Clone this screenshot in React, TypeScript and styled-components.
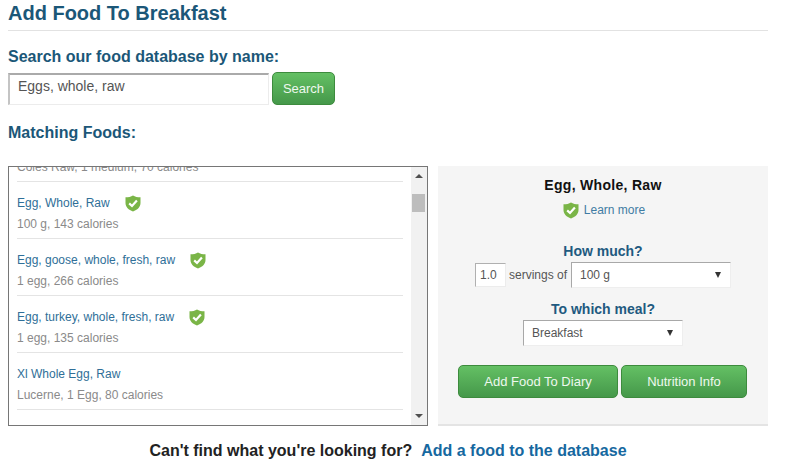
import React from "react";
import styled, { createGlobalStyle } from "styled-components";

const Global = createGlobalStyle`
  html, body { margin: 0; padding: 0; background: #fff; }
  body { font-family: "Liberation Sans", Arial, sans-serif; }
`;

const Page = styled.div`
  width: 760px;
  height: 472px;
  padding: 0 35px 0 8px;
  overflow: hidden;
`;
const Title = styled.h1`
  margin: 0;
  height: 30px;
  line-height: 26px;
  font-size: 20px;
  font-weight: bold;
  color: #1b5778;
  border-bottom: 1px solid #e2e2e2;
`;
const SearchLabel = styled.h2`
  margin: 16px 0 0;
  height: 20px;
  line-height: 20px;
  font-size: 16px;
  font-weight: bold;
  color: #1b5778;
`;
const SearchRow = styled.div`
  display: flex;
  align-items: flex-start;
  gap: 3px;
  margin-top: 5px;
`;
const SearchInput = styled.div`
  box-sizing: border-box;
  width: 261px;
  height: 32px;
  margin-top: 1px;
  padding: 2px 0 0 8px;
  font-size: 14px;
  line-height: 18px;
  color: #555;
  background: #fff;
  border: 1px solid #ececec;
  border-top: 2px solid #aaa;
  border-left: 2px solid #c4c4c4;
`;
const GreenButton = styled.button<{ $w: number; $h: number }>`
  box-sizing: border-box;
  width: ${(p) => p.$w}px;
  height: ${(p) => p.$h}px;
  padding: 0;
  font-family: inherit;
  font-size: 13px;
  color: #eef8ee;
  background: linear-gradient(#64c064, #45984a);
  border: 1px solid #3d8b3d;
  border-radius: 5px;
`;
const MatchLabel = styled.h2`
  margin: 18px 0 0;
  height: 20px;
  line-height: 20px;
  font-size: 16px;
  font-weight: bold;
  color: #1b5778;
`;
const Columns = styled.div`
  display: flex;
  gap: 10px;
  margin-top: 23px;
`;
const ListBox = styled.div`
  box-sizing: border-box;
  display: flex;
  width: 420px;
  height: 260px;
  border: 1px solid #767676;
  overflow: hidden;
`;
const ListInner = styled.div`
  flex: 1;
  min-width: 0;
  padding: 0 8px;
  margin-top: -42px;
`;
const Row = styled.div`
  box-sizing: border-box;
  height: 57px;
  padding-top: 11px;
  border-bottom: 1px solid #e4e4e4;
`;
const NameLine = styled.div`
  display: flex;
  align-items: center;
  height: 20px;
  font-size: 12px;
  color: #2f6f98;
`;
const Sub = styled.div`
  height: 20px;
  margin-top: 1px;
  line-height: 20px;
  font-size: 12px;
  color: #8a8a8a;
`;
const NameCheck = styled.span`
  display: inline-flex;
  margin-left: 15px;
`;
const Scrollbar = styled.div`
  position: relative;
  flex: none;
  width: 16px;
  background: #f1f1f1;
  display: flex;
  flex-direction: column;
  align-items: center;
  justify-content: space-between;
  padding: 7px 0;
  box-sizing: border-box;
`;
const Thumb = styled.div`
  position: absolute;
  top: 27px;
  left: 1px;
  width: 13px;
  height: 18px;
  background: #bdbdbd;
`;
const ArrowUp = styled.div`
  width: 0;
  height: 0;
  border-left: 4px solid transparent;
  border-right: 4px solid transparent;
  border-bottom: 4px solid #505050;
`;
const ArrowDown = styled(ArrowUp)`
  border-bottom: 0;
  border-top: 4px solid #505050;
`;
const Panel = styled.div`
  box-sizing: border-box;
  width: 330px;
  height: 260px;
  padding-top: 11px;
  background: #f5f5f5;
  border-bottom: 2px solid #e4e4e4;
  display: flex;
  flex-direction: column;
  align-items: center;
`;
const PanelName = styled.div`
  height: 16px;
  line-height: 16px;
  font-size: 14px;
  font-weight: bold;
  color: #111;
  letter-spacing: 0.3px;
`;
const LearnRow = styled.div`
  display: flex;
  align-items: center;
  gap: 5px;
  margin: 7px 0 0 2px;
  height: 20px;
  font-size: 12px;
  color: #3f7ca3;
`;
const PanelHeading = styled.div<{ $mt: number }>`
  margin-top: ${(p) => p.$mt}px;
  height: 18px;
  line-height: 18px;
  font-size: 14px;
  font-weight: bold;
  color: #1f5a80;
`;
const ServingRow = styled.div`
  display: flex;
  align-items: center;
  height: 26px;
  margin-top: 2px;
  font-size: 12px;
  color: #555;
`;
const QtyBox = styled.div`
  box-sizing: border-box;
  width: 31px;
  height: 24px;
  padding: 0 0 0 4px;
  margin-right: 3px;
  line-height: 22px;
  background: #fff;
  border: 1px solid #ececec;
  border-top: 1px solid #b0b0b0;
  border-left: 1px solid #b0b0b0;
`;
const SelectBox = styled.div<{ $w: number }>`
  box-sizing: border-box;
  display: flex;
  align-items: center;
  justify-content: space-between;
  width: ${(p) => p.$w}px;
  height: 26px;
  padding: 0 9px 0 8px;
  font-size: 12px;
  color: #555;
  background: #fff;
  border: 1px solid #eee;
  border-top: 1px solid #a8a8a8;
  border-left: 1px solid #a8a8a8;
`;
const Caret = styled.span`
  width: 0;
  height: 0;
  border-left: 3px solid transparent;
  border-right: 3px solid transparent;
  border-top: 6px solid #333;
`;
const ServingLabel = styled.span`
  margin-right: 4px;
`;
const MealSelect = styled.div`
  margin-top: 2px;
`;
const ButtonRow = styled.div`
  display: flex;
  gap: 3px;
  margin: 19px 1px 0 0;
`;
const Footer = styled.div`
  display: flex;
  justify-content: center;
  gap: 9px;
  margin-top: 15px;
  height: 20px;
  line-height: 20px;
  font-size: 16px;
  font-weight: bold;
  color: #222;
`;
const FooterLink = styled.span`
  color: #1668a0;
`;

const Shield = ({ size }: { size: number }) => (
  <svg width={size} height={size + 1} viewBox="0 0 16 17" aria-hidden="true">
    <path
      d="M8 0.5 C10 1.8 12.6 2.3 15.5 2.3 L15.5 8 C15.5 12 12.4 15 8 16.5 C3.6 15 0.5 12 0.5 8 L0.5 2.3 C3.4 2.3 6 1.8 8 0.5 Z"
      fill="#7ab547"
    />
    <path d="M4.2 8.4 L7 11 L11.9 5.6" fill="none" stroke="#fff" strokeWidth="2.2" />
  </svg>
);

const foods = [
  { name: "", sub: "Coles Raw, 1 medium, 70 calories", verified: false },
  { name: "Egg, Whole, Raw", sub: "100 g, 143 calories", verified: true },
  { name: "Egg, goose, whole, fresh, raw", sub: "1 egg, 266 calories", verified: true },
  { name: "Egg, turkey, whole, fresh, raw", sub: "1 egg, 135 calories", verified: true },
  { name: "Xl Whole Egg, Raw", sub: "Lucerne, 1 Egg, 80 calories", verified: false },
];

export default function App() {
  return (
    <Page>
      <Global />
      <Title>Add Food To Breakfast</Title>
      <SearchLabel>Search our food database by name:</SearchLabel>
      <SearchRow>
        <SearchInput>Eggs, whole, raw</SearchInput>
        <GreenButton $w={63} $h={33}>Search</GreenButton>
      </SearchRow>
      <MatchLabel>Matching Foods:</MatchLabel>
      <Columns>
        <ListBox>
          <ListInner>
            {foods.map((f) => (
              <Row key={f.sub}>
                <NameLine>
                  {f.name}
                  {f.verified && (
                    <NameCheck>
                      <Shield size={16} />
                    </NameCheck>
                  )}
                </NameLine>
                <Sub>{f.sub}</Sub>
              </Row>
            ))}
          </ListInner>
          <Scrollbar>
            <ArrowUp />
            <Thumb />
            <ArrowDown />
          </Scrollbar>
        </ListBox>
        <Panel>
          <PanelName>Egg, Whole, Raw</PanelName>
          <LearnRow>
            <Shield size={16} />
            Learn more
          </LearnRow>
          <PanelHeading $mt={22}>How much?</PanelHeading>
          <ServingRow>
            <QtyBox>1.0</QtyBox>
            <ServingLabel>servings of</ServingLabel>
            <SelectBox $w={160}>
              100 g
              <Caret />
            </SelectBox>
          </ServingRow>
          <PanelHeading $mt={12}>To which meal?</PanelHeading>
          <MealSelect>
            <SelectBox $w={160}>
              Breakfast
              <Caret />
            </SelectBox>
          </MealSelect>
          <ButtonRow>
            <GreenButton $w={160} $h={33}>Add Food To Diary</GreenButton>
            <GreenButton $w={126} $h={33}>Nutrition Info</GreenButton>
          </ButtonRow>
        </Panel>
      </Columns>
      <Footer>
        <span>Can't find what you're looking for?</span>
        <FooterLink>Add a food to the database</FooterLink>
      </Footer>
    </Page>
  );
}
